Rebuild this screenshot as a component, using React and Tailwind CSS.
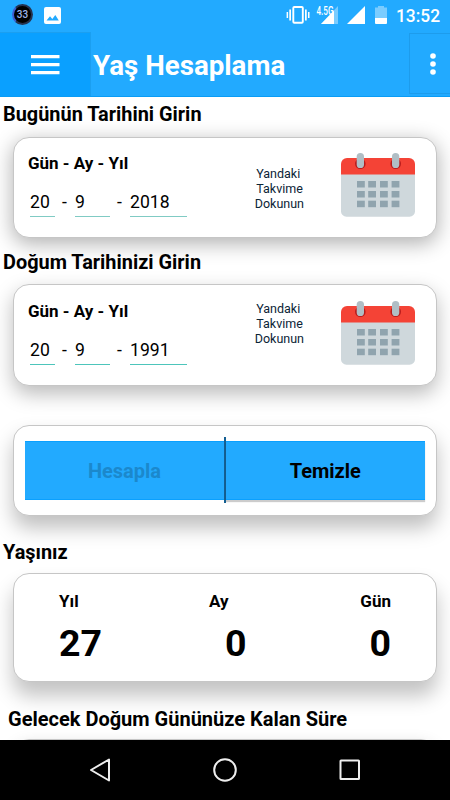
import React from 'react'

const CalendarIcon = () => (
  <svg width="74" height="65" viewBox="0 0 74 65" className="block">
    <path d="M0 21h74v37a5.500 5.500 0 0 1-5.500 5.700h-63A5.500 5.500 0 0 1 0 58z" fill="#cfd8dc" />
    <path d="M0 21.500V11a6 6 0 0 1 6-6h62a6 6 0 0 1 6 6v10.500z" fill="#f44336" />
    <circle cx="19.300" cy="10.800" r="5.300" fill="#b71c1c" />
    <circle cx="54.700" cy="10.800" r="5.300" fill="#b71c1c" />
    <rect x="15.700" y="0" width="7.300" height="15" rx="3.600" fill="#b0bec5" />
    <rect x="51" y="0" width="7.300" height="15" rx="3.600" fill="#b0bec5" />
    {[28, 38, 47.700].map((y) =>
      [16, 27.200, 39, 50.600].map((x) => (
        <rect key={`${x}-${y}`} x={x} y={y} width="7.800" height="6.500" fill="#90a4ae" />
      ))
    )}
  </svg>
)

const StatusBar = () => (
  <div className="flex h-8 items-center">
    <div className="ml-3 -mt-1 flex size-[21px] items-center justify-center rounded-full border-2 border-[#26324e] border-l-[#3d5fd0] bg-black text-[10px] font-medium text-[#9db4e8]">
      33
    </div>
    <svg width="17" height="17" viewBox="0 0 17 17" className="ml-[11px] -mt-0.5">
      <rect width="17" height="17" rx="2" fill="#fff" />
      <path d="M2.500 13.500l3.500-4.300 2.300 2.700 3-4 3.500 5.600z" fill="#22aaff" />
    </svg>
    <svg width="164" height="32" viewBox="0 0 164 32" className="ml-auto shrink-0" fill="#fff">
      <rect x="7.300" y="7" width="9.500" height="15.800" rx="1" fill="none" stroke="#fff" strokeWidth="1.900" />
      <path d="M.6 12h1.500v6H.6zM3.300 9.500h1.700v11H3.300zM19 9.500h1.700v11H19zM22 12h1.500v6H22z" />
      <path d="M52 6v18H35z" opacity=".4" />
      <path d="M48 10.500V24H35z" />
      <text x="30.500" y="14.500" fontSize="12.500" fontWeight="500" textLength="17" lengthAdjust="spacingAndGlyphs">4.5G</text>
      <path d="M79 6v18H61z" />
      <path d="M89 7.500h3V6h6v1.500h3V18H89z" opacity=".4" />
      <path d="M89 18h12v5q0 1-1 1H90q-1 0-1-1z" />
      <text x="110" y="22" fontSize="18" fontWeight="500" textLength="44" lengthAdjust="spacingAndGlyphs">13:52</text>
    </svg>
  </div>
)

const AppBar = () => (
  <div className="flex h-[65px] border-b border-[#0a9cf5]">
    <button className="flex w-[91px] items-center justify-center border-r border-t border-[#1b9ff0] bg-[#0aa0ff]">
      <svg width="29" height="20" viewBox="0 0 29 20" fill="#fff">
        <path d="M0 0h28.500v3.200H0zM0 8h28.500v3.200H0zM0 16h28.500v3.200H0z" />
      </svg>
    </button>
    <h1 className="ml-0.5 flex-1 text-[27.700px] font-bold leading-[68px] text-white">Yaş Hesaplama</h1>
    <button className="mb-0.5 mt-px flex w-[41px] items-center justify-center border-y border-l border-[#1d9cec]">
      <svg width="6" height="22" viewBox="0 0 6 22" fill="#fff" className="ml-[5px]">
        <circle cx="3" cy="3" r="2.800" />
        <circle cx="3" cy="11" r="2.800" />
        <circle cx="3" cy="19" r="2.800" />
      </svg>
    </button>
  </div>
)

const Card = ({ className, children }) => (
  <div className={`mx-[13px] rounded-[16px] border border-[#c6c6c6] bg-white ${className}`}>{children}</div>
)

const DateCard = ({ day, month, year, className, hintClass, lineClass }) => (
  <Card className={`flex justify-between pl-[14px] pr-[21px] ${className}`}>
    <div>
      <p className="mt-[15px] text-[17px] font-bold leading-5">Gün - Ay - Yıl</p>
      <div className="mt-4 flex pl-0.5 text-[17.600px] leading-[26px]">
        <span className={`h-7 w-[25px] border-b ${lineClass}`}>{day}</span>
        <span className="w-5 pl-[7px]">-</span>
        <span className={`h-7 w-[35px] border-b ${lineClass}`}>{month}</span>
        <span className="w-5 pl-[7px]">-</span>
        <span className={`h-7 w-[57px] border-b ${lineClass}`}>{year}</span>
      </div>
    </div>
    <div className="flex">
      <p className={`mr-[37px] text-[12.500px] leading-[15px] text-[#0c2436] ${hintClass}`}>
        <span className="block pl-[1.500px]">Yandaki</span>
        <span className="block pl-[1.500px]">Takvime</span>
        Dokunun
      </p>
      <div className="mt-[15px]">
        <CalendarIcon />
      </div>
    </div>
  </Card>
)

const NavBar = () => (
  <div className="flex h-[60px] items-center justify-center bg-black">
    <svg width="272" height="26" viewBox="0 0 272 26" fill="none" stroke="#eee" strokeWidth="2">
      <path d="M20 2.500v21L2 13z" strokeLinejoin="round" />
      <circle cx="136" cy="13" r="10.800" />
      <rect x="251.500" y="3.500" width="18.500" height="18.500" rx=".5" />
    </svg>
  </div>
)

const App = () => {
  return (
    <div className="flex h-[800px] w-[450px] flex-col overflow-hidden bg-white font-['Roboto',sans-serif] text-black">
      <header className="bg-[#22aaff]">
        <StatusBar />
        <AppBar />
      </header>

      <main className="h-[643px] overflow-hidden">
        <h2 className="relative h-10 pl-[3px] text-[19.900px] font-bold leading-[35px]">Bugünün Tarihini Girin</h2>
        <DateCard
          day="20"
          month="9"
          year="2018"
          className="h-[101px] shadow-[0_5px_20px_1px_rgba(0,0,0,0.3)]"
          hintClass="mt-[28px]"
          lineClass="border-[#80cbc4]"
        />
        <h2 className="relative h-[46px] pl-[3px] text-[19.900px] font-bold leading-[49px]">Doğum Tarihinizi Girin</h2>
        <DateCard
          day="20"
          month="9"
          year="1991"
          className="h-[102px] pt-px shadow-[0_8px_20px_0px_rgba(0,0,0,0.27)]"
          hintClass="mt-[15px]"
          lineClass="border-[#4dc5bb]"
        />

        <Card className="mt-[39px] flex h-[91px] px-[11px] py-[15px] shadow-[0_12px_20px_0px_rgba(0,0,0,0.25)]">
          <button className="h-[59px] w-[199px] border-y border-[#0aa0ff] bg-[#22aaff] pt-px text-[20px] font-bold text-[#1b88cc]">
            Hesapla
          </button>
          <div className="-mb-[3px] -mt-1 w-[1.500px] bg-[#145f92]" />
          <button className="h-[59px] flex-1 border-y border-[#0aa0ff] bg-[#22aaff] pt-px text-[20px] font-bold shadow-[0_2px_1px_rgba(0,0,0,0.2)]">
            Temizle
          </button>
        </Card>

        <h2 className="relative h-[57px] pl-[3px] pt-[25px] text-[19.900px] font-bold leading-6">Yaşınız</h2>
        <Card className="flex h-[109px] justify-between pl-[45px] pr-[45px] pt-[17px] shadow-[0_14px_20px_0px_rgba(0,0,0,0.24)]">
          <div className="w-[150px]">
            <p className="text-[17px] font-bold leading-5">Yıl</p>
            <p className="mt-2 text-[37.500px] font-bold leading-[48px]">27</p>
          </div>
          <div className="flex-1">
            <p className="text-[17px] font-bold leading-5">Ay</p>
            <p className="mt-2 pl-4 text-[37.500px] font-bold leading-[48px]">0</p>
          </div>
          <div className="text-right">
            <p className="text-[17px] font-bold leading-5">Gün</p>
            <p className="mt-2 text-[37.500px] font-bold leading-[48px]">0</p>
          </div>
        </Card>
        <h2 className="relative h-[57px] pl-2 pt-[25px] text-[20px] font-bold leading-6">
          Gelecek Doğum Gününüze Kalan Süre
        </h2>
        <Card className="h-20 shadow-[0_5px_16px_rgba(0,0,0,0.15)]" />
      </main>

      <NavBar />
    </div>
  )
}

export default App
